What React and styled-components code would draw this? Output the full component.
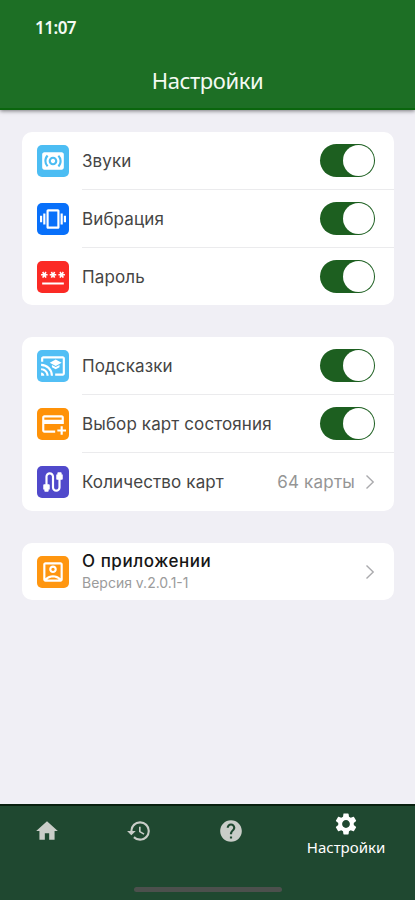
import React, { useState } from 'react';
import styled, { createGlobalStyle } from 'styled-components';
import {
  MdHome,
  MdHistory,
  MdHelp,
  MdSettings,
  MdSurroundSound,
  MdVibration,
  MdPassword,
  MdCastForEducation,
  MdAddCard,
  MdCable,
  MdOutlineAccountBox,
} from 'react-icons/md';

const GlobalStyle = createGlobalStyle`
  * {
    box-sizing: border-box;
  }

  body {
    margin: 0;
    background: #f0eff5;
  }
`

const Screen = styled.div`
  display: flex;
  flex-direction: column;
  height: 900px;
  width: 415px;
  overflow: hidden;
  background: #f0eff5;
  font-family: Inter, 'Noto Sans', sans-serif;
`

const Header = styled.header`
  display: flex;
  flex-direction: column;
  height: 110px;
  flex-shrink: 0;
  background: #1d6f25;
  border-bottom: 2px solid #0a660d;
  box-shadow: 0 1px 4px rgba(0, 0, 0, 0.5);
  color: #f4faf3;
  font-family: 'Noto Sans', sans-serif;

  h1 {
    margin: 0;
    text-align: center;
    font-size: 22px;
    font-weight: 400;
    line-height: 28px;
    letter-spacing: -0.4px;
  }
`

const Clock = styled.div`
  padding: 17px 0 0 35px;
  height: 66px;
  font-size: 17px;
  font-weight: 600;
  line-height: 22px;
  letter-spacing: -0.5px;
`

const Content = styled.main`
  display: flex;
  flex-direction: column;
  flex: 1;
  gap: 32px;
  padding: 22px 21px 0 22px;
`

const Card = styled.section`
  border-radius: 10px;
  background: #fff;
`

const Row = styled.div`
  display: flex;
  align-items: center;
  height: ${props => props.$height || '58px'};
  padding-left: 15px;
`

const Tile = styled.div`
  display: flex;
  align-items: center;
  justify-content: center;
  width: 32px;
  height: 32px;
  margin-right: 13px;
  border-radius: 5px;
  background: ${props => props.$color};
  color: white;
  flex-shrink: 0;
`

const RowBody = styled.div`
  display: flex;
  align-items: center;
  justify-content: space-between;
  flex: 1;
  height: 100%;
  padding-right: 19px;
  border-bottom: ${props => (props.$last ? 'none' : '1px solid #ebebed')};
`

const Label = styled.span`
  color: #454545;
  font-size: 17px;
  font-weight: 400;
  letter-spacing: 0.12px;
  white-space: nowrap;
`

const Value = styled.span`
  display: flex;
  align-items: center;
  gap: 11px;
  color: #959595;
  font-size: 17px;
  letter-spacing: 0.2px;
`

const About = styled.div`
  display: flex;
  flex-direction: column;

  strong {
    color: #161616;
    font-size: 17px;
    font-weight: 500;
    line-height: 22px;
    letter-spacing: 0.55px;
  }

  small {
    color: #9b9b9b;
    font-size: 14px;
    line-height: 22px;
  }
`

const Switch = styled.button`
  display: flex;
  justify-content: ${props => (props.$on ? 'flex-end' : 'flex-start')};
  width: 55px;
  height: 33px;
  padding: 1px;
  border: none;
  border-radius: 17px;
  background: ${props => (props.$on ? '#1d5f20' : '#c9c9cc')};
`

const Knob = styled.span`
  width: 31px;
  height: 31px;
  border-radius: 50%;
  background: white;
`

const TabBar = styled.nav`
  display: flex;
  flex-direction: column;
  justify-content: space-between;
  align-items: center;
  flex-shrink: 0;
  height: 96px;
  padding-bottom: 8px;
  border-top: 2px solid #08200f;
  background: #1f4830;
`

const Tabs = styled.div`
  display: grid;
  grid-template-columns: 93px 92px 92px 138px;
  width: 100%;
`

const Tab = styled.div`
  display: flex;
  flex-direction: column;
  align-items: center;
  height: 60px;
  padding-top: ${props => (props.$active ? '5px' : '12px')};
  color: ${props => (props.$active ? '#fff' : '#c9cdc8')};
  font-family: 'Noto Sans', sans-serif;
  font-size: 15px;
  line-height: 20px;
`

const HomeIndicator = styled.div`
  width: 148px;
  height: 5px;
  border-radius: 3px;
  background: #4c504d;
`

const Chevron = () => (
  <svg width="9" height="16" viewBox="0 0 9 16" fill="none">
    <path d="M0.5 1.5L7.2 8L0.5 14.5" stroke="#aaaaad" strokeWidth="1.4" />
  </svg>
)

const soundRows = [
  { id: 'sounds', label: 'Звуки', color: '#4cbdf3', icon: MdSurroundSound },
  { id: 'vibration', label: 'Вибрация', color: '#0870fa', icon: MdVibration },
  { id: 'password', label: 'Пароль', color: '#fb2a25', icon: MdPassword, height: '57px' },
];

const cardRows = [
  { id: 'hints', label: 'Подсказки', color: '#52bff5', icon: MdCastForEducation },
  { id: 'states', label: 'Выбор карт состояния', color: '#ff9208', icon: MdAddCard },
  { id: 'count', label: 'Количество карт', color: '#5049cb', icon: MdCable, value: '64 карты' },
];

const App = () => {
  const [enabled, setEnabled] = useState({
    sounds: true,
    vibration: true,
    password: true,
    hints: true,
    states: true,
  });

  const toggle = (id) => {
    setEnabled({ ...enabled, [id]: !enabled[id] });
  }

  const renderRows = (rows) => rows.map((row, index) => {
    const Icon = row.icon;
    return (
      <Row key={row.id} $height={row.height}>
        <Tile $color={row.color}><Icon size={26} /></Tile>
        <RowBody $last={index === rows.length - 1}>
          <Label>{row.label}</Label>
          {row.value ? (
            <Value>{row.value}<Chevron /></Value>
          ) : (
            <Switch $on={enabled[row.id]} onClick={() => toggle(row.id)}>
              <Knob />
            </Switch>
          )}
        </RowBody>
      </Row>
    )
  })

  return (
    <Screen>
      <GlobalStyle />
      <Header>
        <Clock>11:07</Clock>
        <h1>Настройки</h1>
      </Header>
      <Content>
        <Card>{renderRows(soundRows)}</Card>
        <Card>{renderRows(cardRows)}</Card>
        <Card>
          <Row $height="57px">
            <Tile $color="#ff9610"><MdOutlineAccountBox size={26} /></Tile>
            <RowBody $last>
              <About>
                <strong>О приложении</strong>
                <small>Версия v.2.0.1-1</small>
              </About>
              <Chevron />
            </RowBody>
          </Row>
        </Card>
      </Content>
      <TabBar>
        <Tabs>
          <Tab><MdHome size={26} /></Tab>
          <Tab><MdHistory size={26} /></Tab>
          <Tab><MdHelp size={26} /></Tab>
          <Tab $active>
            <MdSettings size={26} />
            Настройки
          </Tab>
        </Tabs>
        <HomeIndicator />
      </TabBar>
    </Screen>
  )
}

export default App;
